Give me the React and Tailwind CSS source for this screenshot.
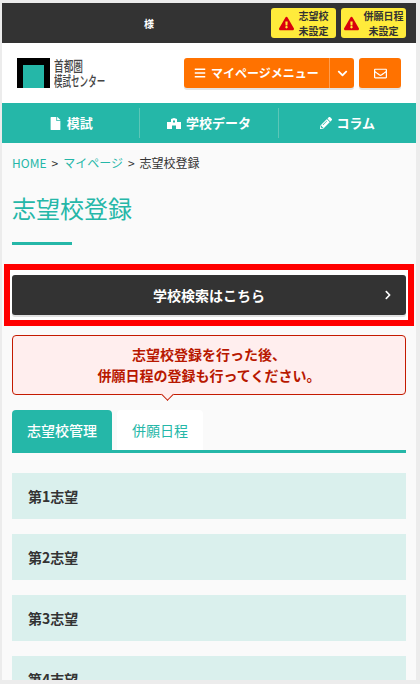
import React from "react";
import { FaFile, FaPencilAlt, FaBars, FaChevronDown, FaExclamationTriangle, FaChevronRight, FaRegEnvelope } from "react-icons/fa";

const font = { fontFamily: '"Noto Sans CJK JP", "Noto Sans", sans-serif' };

function Alert({ a, b }) {
  return (
    <div className="flex items-center justify-center gap-[5px] h-[30px] w-[65px] bg-[#ffeb3b] rounded-[3px] text-[#333] text-[10px] leading-[15px] font-bold">
      <FaExclamationTriangle className="text-[#d9000d] text-[15px] shrink-0" />
      <div className="text-center">{a}<br />{b}</div>
    </div>
  );
}

function NavItem({ icon, label, border }) {
  return (
    <div className={`flex-1 h-[30px] flex items-center justify-center gap-[5px] text-white text-[13px] font-bold ${border ? "border-l border-[#5cc6b7]" : ""}`}>
      {icon}<span>{label}</span>
    </div>
  );
}

function Row({ label }) {
  return (
    <div className="h-[46px] shrink-0 bg-[#daf0ed] flex items-center pl-[16px] text-[14px] font-bold text-[#333]">{label}</div>
  );
}

function SchoolIcon() {
  return (
    <svg width="14" height="11" viewBox="0 0 14 11" fill="currentColor" className="shrink-0">
      <path fillRule="evenodd" d="M4 1 L7 0 L10 1 V4 H14 V11 H9 V7.5 H5 V11 H0 V4 H4 Z M6 2.5 V4.5 H8 V2.5 Z" />
    </svg>
  );
}

export default function App() {
  return (
    <div style={font} className="h-[684px] w-[420px] overflow-hidden bg-[#ececec] pl-[2px] pt-[3px] pr-[4px] pb-[4px]">
      <div className="h-[677px] overflow-hidden bg-[#fafafa] flex flex-col">
        <div className="h-[40px] shrink-0 bg-[#333] flex items-center pr-[10px] pl-[142px]">
          <span className="text-white text-[10px] font-bold">様</span>
          <div className="ml-auto flex gap-[5px]">
            <Alert a="志望校" b="未設定" />
            <Alert a="併願日程" b="未設定" />
          </div>
        </div>

        <div className="h-[60px] shrink-0 bg-white flex items-center pl-[15px] pr-[15px]">
          <div className="w-[33px] h-[30px] bg-black flex items-end justify-end pr-[6px] shrink-0">
            <div className="w-[21px] h-[23px] bg-[#25b7a8]" />
          </div>
          <div className="ml-[4px] w-[51px] text-[#444] text-[14px] leading-[15px] font-medium whitespace-nowrap">
            <div className="origin-left scale-x-[0.69]">首都圏</div>
            <div className="origin-left scale-x-[0.61]">模試センター</div>
          </div>
          <div className="ml-auto flex gap-[5px]">
            <div className="h-[30px] w-[170px] bg-[#ff7200] rounded-[3px] flex text-white shadow-[0_2px_0_#e4e4e4]">
              <div className="flex-1 flex items-center justify-center gap-[5px] text-[12px] font-bold">
                <FaBars className="text-[12px]" /><span>マイページメニュー</span>
              </div>
              <div className="w-[25px] border-l border-[#ff9d4f] flex items-center justify-center">
                <FaChevronDown className="text-[11px]" />
              </div>
            </div>
            <div className="h-[30px] w-[42px] bg-[#ff7200] rounded-[3px] flex items-center justify-center text-white shadow-[0_2px_0_#e4e4e4]">
              <FaRegEnvelope className="text-[13px]" />
            </div>
          </div>
        </div>

        <div className="h-[40px] shrink-0 bg-[#25b7a8] flex items-center">
          <NavItem icon={<FaFile className="text-[13px]" />} label="模試" />
          <NavItem border icon={<SchoolIcon />} label="学校データ" />
          <NavItem border icon={<FaPencilAlt className="text-[12px]" />} label="コラム" />
        </div>

        <div className="px-[10px] pt-[10px] text-[12px] leading-[20px] text-[#333] flex gap-[5px]">
          <span className="text-[#25b7a8]">HOME</span><span>&gt;</span>
          <span className="text-[#25b7a8]">マイページ</span><span>&gt;</span><span>志望校登録</span>
        </div>

        <div className="px-[10px] pt-[17px]">
          <h1 className="text-[24px] leading-[36px] text-[#25b7a8]">志望校登録</h1>
          <div className="w-[60px] h-[3px] bg-[#25b7a8] mt-[16px]" />
        </div>

        <div className="mx-[2px] mt-[19px] shrink-0 border-[6px] border-[#f00] bg-white h-[62px] px-[2px] pt-[5px]">
          <div className="h-[40px] bg-[#333] rounded-[3px] flex items-center relative text-white text-[14px] font-bold justify-center shadow-[0_2px_0_#e0e0e0]">
            学校検索はこちら
            <FaChevronRight className="absolute right-[13px] top-[15px] text-[10px]" />
          </div>
        </div>

        <div className="mx-[10px] mt-[9px] h-[60px] shrink-0 relative border border-[#c41a00] bg-[#ffeeee] rounded-[4px] flex items-center justify-center text-center text-[14px] leading-[21px] font-bold text-[#b81800]">
          <div>志望校登録を行った後、<br />併願日程の登録も行ってください。</div>
          <div className="absolute left-[150px] bottom-[-5px] w-[9px] h-[9px] rotate-45 bg-[#ffeeee] border-r border-b border-[#c41a00]" />
        </div>

        <div className="mx-[10px] mt-[15px] shrink-0 flex gap-[5px] border-b-[3px] border-[#25b7a8]">
          <div className="w-[100px] h-[40px] bg-[#25b7a8] rounded-t-[4px] flex items-center justify-center text-white text-[14px] font-medium">志望校管理</div>
          <div className="w-[86px] h-[40px] bg-white rounded-t-[4px] flex items-center justify-center text-[#25b7a8] text-[14px]">併願日程</div>
        </div>

        <div className="mx-[10px] mt-[20px] flex flex-col gap-[15px]">
          <Row label="第1志望" />
          <Row label="第2志望" />
          <Row label="第3志望" />
          <Row label="第4志望" />
        </div>
      </div>
    </div>
  );
}
